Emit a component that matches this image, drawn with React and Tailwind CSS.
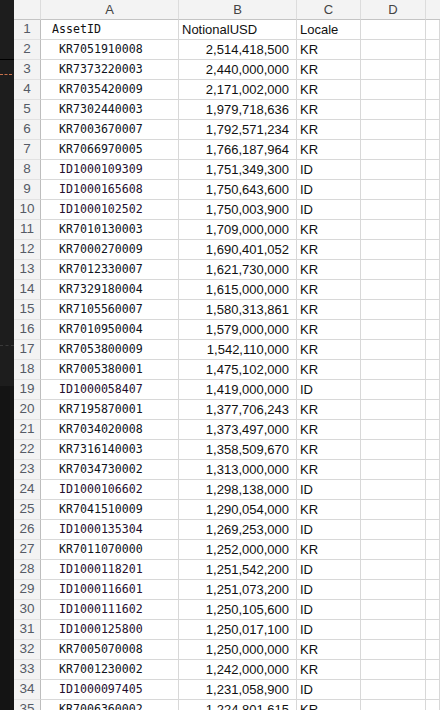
import React from 'react';

const ROWS = [
  ['KR7051910008', '2,514,418,500', 'KR'],
  ['KR7373220003', '2,440,000,000', 'KR'],
  ['KR7035420009', '2,171,002,000', 'KR'],
  ['KR7302440003', '1,979,718,636', 'KR'],
  ['KR7003670007', '1,792,571,234', 'KR'],
  ['KR7066970005', '1,766,187,964', 'KR'],
  ['ID1000109309', '1,751,349,300', 'ID'],
  ['ID1000165608', '1,750,643,600', 'ID'],
  ['ID1000102502', '1,750,003,900', 'ID'],
  ['KR7010130003', '1,709,000,000', 'KR'],
  ['KR7000270009', '1,690,401,052', 'KR'],
  ['KR7012330007', '1,621,730,000', 'KR'],
  ['KR7329180004', '1,615,000,000', 'KR'],
  ['KR7105560007', '1,580,313,861', 'KR'],
  ['KR7010950004', '1,579,000,000', 'KR'],
  ['KR7053800009', '1,542,110,000', 'KR'],
  ['KR7005380001', '1,475,102,000', 'KR'],
  ['ID1000058407', '1,419,000,000', 'ID'],
  ['KR7195870001', '1,377,706,243', 'KR'],
  ['KR7034020008', '1,373,497,000', 'KR'],
  ['KR7316140003', '1,358,509,670', 'KR'],
  ['KR7034730002', '1,313,000,000', 'KR'],
  ['ID1000106602', '1,298,138,000', 'ID'],
  ['KR7041510009', '1,290,054,000', 'KR'],
  ['ID1000135304', '1,269,253,000', 'ID'],
  ['KR7011070000', '1,252,000,000', 'KR'],
  ['ID1000118201', '1,251,542,200', 'ID'],
  ['ID1000116601', '1,251,073,200', 'ID'],
  ['ID1000111602', '1,250,105,600', 'ID'],
  ['ID1000125800', '1,250,017,100', 'ID'],
  ['KR7005070008', '1,250,000,000', 'KR'],
  ['KR7001230002', '1,242,000,000', 'KR'],
  ['ID1000097405', '1,231,058,900', 'ID'],
  ['KR7006360002', '1,224,801,615', 'KR'],
];

const sans = "font-['Liberation_Sans',Arial,sans-serif]";
const mono = "font-['DejaVu_Sans_Mono','Liberation_Mono',monospace]";
const cell = 'h-[20px] border-r border-b border-[#d8d8d8] flex items-center overflow-hidden whitespace-nowrap';
const rowHead = `h-[20px] border-r border-b border-r-[#bdbdbd] border-b-[#e2e2e2] bg-[#f3f3f3] flex items-center justify-center text-[13.5px] text-[#555b66] ${sans}`;
const colHead = `h-[20px] border-r border-b border-r-[#dcdcdc] border-b-[#c4c4c4] bg-[#f3f3f3] flex items-center justify-center text-[13px] text-[#444] ${sans}`;

export default function App() {
  return (
    <div className="w-[440px] h-[710px] overflow-hidden bg-white flex">
      <div className="w-[14px] shrink-0 flex flex-col bg-[#1d1d1d]">
        <div className="h-[60px] border-b border-black" />
        <div className="h-[14px]" />
        <div className="h-0 w-[12px] border-t border-dashed border-[#c8704a]" />
        <div className="h-[270px]" />
        <div className="h-0 border-t border-dashed border-[#3a3a3a]" />
        <div className="h-[40px]" />
        <div className="flex-1 bg-[#141414]" />
      </div>
      <div className="flex-1 grid grid-cols-[27px_138px_118px_64px_65px_1fr] auto-rows-[20px] content-start">
        <div className={colHead} />
        <div className={colHead}>A</div>
        <div className={colHead}>B</div>
        <div className={colHead}>C</div>
        <div className={colHead}>D</div>
        <div className="h-[20px] border-b border-b-[#c4c4c4] bg-[#f3f3f3]" />

        <div className={rowHead}>1</div>
        <div className={`${cell} pl-[11px] text-[11.6px] text-[#111] ${mono}`}>AssetID</div>
        <div className={`${cell} pl-[3px] text-[13px] text-[#111] ${sans}`}>NotionalUSD</div>
        <div className={`${cell} pl-[3px] text-[13px] text-[#111] ${sans}`}>Locale</div>
        <div className={cell} />
        <div className={cell} />

        {ROWS.map(([id, amt, loc], i) => (
          <React.Fragment key={id}>
            <div className={rowHead}>{i + 2}</div>
            <div className={`${cell} pl-[18px] text-[11.6px] ${id.startsWith('ID') ? 'text-[#26102f]' : 'text-[#0f141c]'} ${mono}`}>{id}</div>
            <div className={`${cell} justify-end pr-[7px] text-[13px] text-[#111] ${sans}`}>{amt}</div>
            <div className={`${cell} pl-[3px] text-[13px] text-[#111] ${sans}`}>{loc}</div>
            <div className={cell} />
            <div className={cell} />
          </React.Fragment>
        ))}
      </div>
    </div>
  );
}
